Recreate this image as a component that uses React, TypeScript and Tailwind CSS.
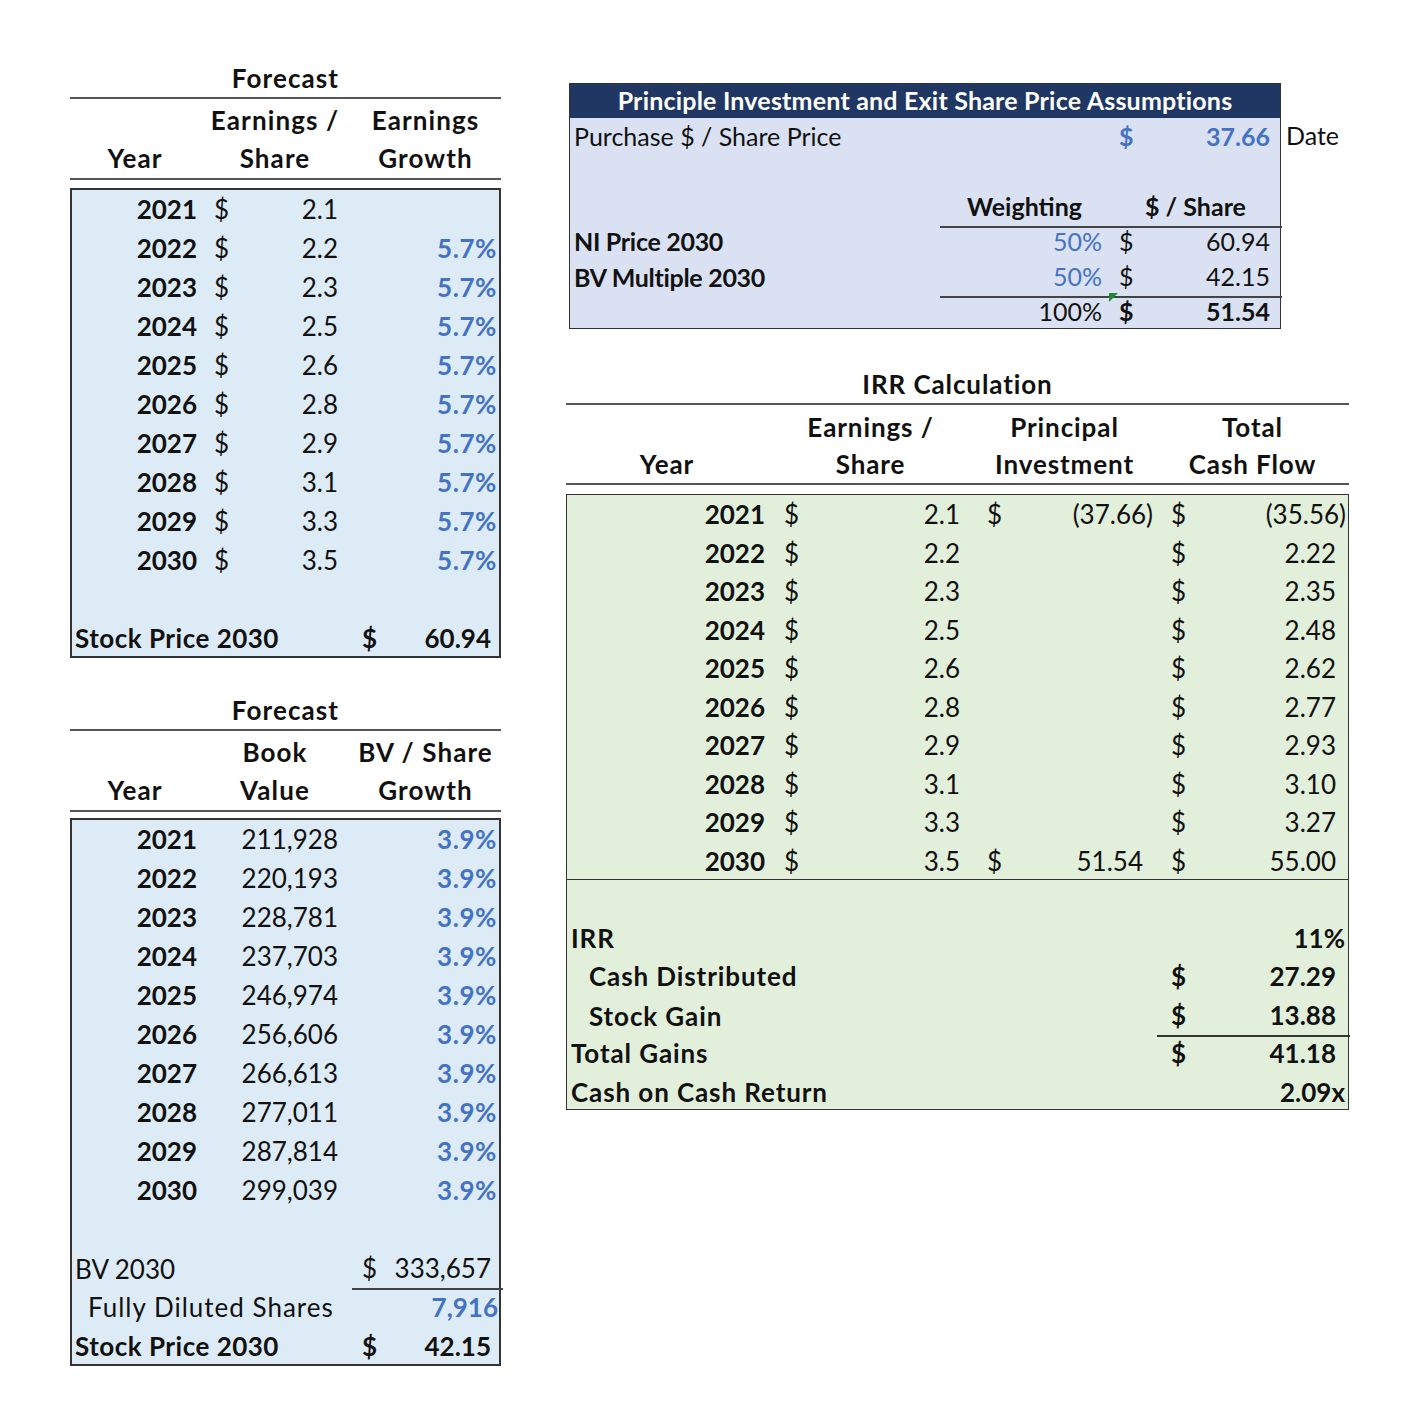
import React from 'react';

const blue = 'text-[#4472c4]';

const Acct: React.FC<{ v: string; bold?: boolean; className?: string; cur?: string }> = ({ v, bold, className = '', cur = '' }) => (
  <div className={`flex justify-between ${bold ? 'font-bold' : ''} ${className}`}>
    <span className={cur}>$</span>
    <span className={cur}>{v}</span>
  </div>
);

const earnings = [
  ['2021', '2.1', ''],
  ['2022', '2.2', '5.7%'],
  ['2023', '2.3', '5.7%'],
  ['2024', '2.5', '5.7%'],
  ['2025', '2.6', '5.7%'],
  ['2026', '2.8', '5.7%'],
  ['2027', '2.9', '5.7%'],
  ['2028', '3.1', '5.7%'],
  ['2029', '3.3', '5.7%'],
  ['2030', '3.5', '5.7%'],
];

const bookValues = [
  ['2021', '211,928'],
  ['2022', '220,193'],
  ['2023', '228,781'],
  ['2024', '237,703'],
  ['2025', '246,974'],
  ['2026', '256,606'],
  ['2027', '266,613'],
  ['2028', '277,011'],
  ['2029', '287,814'],
  ['2030', '299,039'],
];

const irrRows = [
  ['2021', '2.1', '(37.66)', '(35.56)'],
  ['2022', '2.2', '', '2.22'],
  ['2023', '2.3', '', '2.35'],
  ['2024', '2.5', '', '2.48'],
  ['2025', '2.6', '', '2.62'],
  ['2026', '2.8', '', '2.77'],
  ['2027', '2.9', '', '2.93'],
  ['2028', '3.1', '', '3.10'],
  ['2029', '3.3', '', '3.27'],
  ['2030', '3.5', '51.54', '55.00'],
];

const leftCols = 'grid grid-cols-[130px_150px_151px] items-center';
const leftGrid = `${leftCols} h-[39px]`;
const irrCols = 'grid grid-cols-[202px_205px_183px_193px] items-center';
const irrGrid = `${irrCols} h-[38.5px]`;
const boxGrid = 'grid grid-cols-[370px_169px_173px] h-[35px] items-center';

const TableHead: React.FC<{ a: [string, string]; b: [string, string] }> = ({ a, b }) => (
  <div className="tracking-[1.1px]">
    <div className="h-[39px] flex items-center justify-center font-bold border-b-2 border-[#555]">Forecast</div>
    <div className={`${leftCols} h-[40px] pt-[2px] font-bold text-center`}>
      <div></div>
      <div>{a[0]}</div>
      <div>{b[0]}</div>
    </div>
    <div className={`${leftCols} h-[41px] font-bold text-center border-b-2 border-[#555]`}>
      <div>Year</div>
      <div>{a[1]}</div>
      <div>{b[1]}</div>
    </div>
  </div>
);

const Num: React.FC<{ v: string }> = ({ v }) =>
  v.startsWith('(') ? <span>{v}</span> : <span className="pr-[10px]">{v}</span>;

export default function App() {
  return (
    <div className="min-h-[1420px] bg-white text-[#111] font-['Lato','Noto_Sans',sans-serif] flex items-start gap-[65px] pl-[70px] pt-[60px]">
      {/* left column */}
      <div className="w-[431px] text-[26px]">
        <TableHead a={['Earnings /', 'Share']} b={['Earnings', 'Growth']} />
        <div className="mt-[8px] border-2 border-[#333] bg-[#ddebf7]">
          {earnings.map(([y, e, g]) => (
            <div key={y} className={leftGrid}>
              <div className="text-right pr-[5px] font-bold">{y}</div>
              <Acct v={e} className="pl-[12px] pr-[14px]" />
              <div className={`text-right pr-[6px] font-bold tracking-[0.6px] ${blue}`}>{g}</div>
            </div>
          ))}
          <div className={leftGrid}></div>
          <div className={`${leftCols} h-[37px]`}>
            <div className="col-span-2 pl-[3px] font-bold tracking-[0.5px]">Stock Price 2030</div>
            <Acct v="60.94" bold className="pl-[10px] pr-[12px]" />
          </div>
        </div>

        <div className="mt-[34px]">
          <TableHead a={['Book', 'Value']} b={['BV / Share', 'Growth']} />
        </div>
        <div className="mt-[6px] border-2 border-[#333] bg-[#ddebf7]">
          {bookValues.map(([y, v]) => (
            <div key={y} className={leftGrid}>
              <div className="text-right pr-[5px] font-bold">{y}</div>
              <div className="text-right pr-[14px]">{v}</div>
              <div className={`text-right pr-[6px] font-bold tracking-[0.6px] ${blue}`}>3.9%</div>
            </div>
          ))}
          <div className={leftGrid}></div>
          <div className={leftGrid}>
            <div className="col-span-2 pl-[3px]">BV 2030</div>
            <div className="h-full flex items-center justify-between pl-[10px] pr-[12px] border-b-2 border-[#444]">
              <span>$</span>
              <span>333,657</span>
            </div>
          </div>
          <div className={leftGrid}>
            <div className="col-span-2 pl-[16px] tracking-[1px]">Fully Diluted Shares</div>
            <div className={`text-right pr-[5px] font-bold ${blue}`}>7,916</div>
          </div>
          <div className={`${leftCols} h-[37px]`}>
            <div className="col-span-2 pl-[3px] font-bold tracking-[0.5px]">Stock Price 2030</div>
            <Acct v="42.15" bold className="pl-[10px] pr-[12px]" />
          </div>
        </div>
      </div>

      {/* right column */}
      <div className="w-[783px] text-[25px] pt-[23px]">
        <div className="flex items-start ml-[3px]">
          <div className="w-[712px] border border-[#333] bg-[#d9e1f2]">
            <div className="h-[34px] bg-[#203764] text-white font-bold flex items-center justify-center tracking-[0.2px]">
              Principle Investment and Exit Share Price Assumptions
            </div>
            <div className={boxGrid}>
              <div className="col-span-2 pl-[4px]">Purchase $ / Share Price</div>
              <Acct v="37.66" bold cur={blue} className="pl-[10px] pr-[12px]" />
            </div>
            <div className={boxGrid}></div>
            <div className={`${boxGrid} font-bold text-center`}>
              <div></div>
              <div className="h-full flex items-center justify-center border-b-2 border-[#444]">Weighting</div>
              <div className="h-full flex items-center justify-center border-b-2 border-[#444]">$ / Share</div>
            </div>
            <div className={boxGrid}>
              <div className="pl-[4px] font-bold tracking-[-0.3px]">NI Price 2030</div>
              <div className={`text-right pr-[7px] ${blue}`}>50%</div>
              <Acct v="60.94" className="pl-[10px] pr-[12px]" />
            </div>
            <div className={boxGrid}>
              <div className="pl-[4px] font-bold tracking-[-0.3px]">BV Multiple 2030</div>
              <div className={`h-full flex items-center justify-end pr-[7px] border-b-2 border-[#444] ${blue}`}>50%</div>
              <Acct v="42.15" className="h-full items-center pl-[10px] pr-[12px] border-b-2 border-[#444]" />
            </div>
            <div className={boxGrid}>
              <div></div>
              <div className="text-right pr-[7px]">100%</div>
              <div className="relative h-full flex items-center">
                <span className="absolute left-0 top-0 w-0 h-0 border-t-[9px] border-t-[#1e8c2e] border-r-[9px] border-r-transparent"></span>
                <Acct v="51.54" bold className="w-full pl-[10px] pr-[12px]" />
              </div>
            </div>
          </div>
          <div className="pt-[35px] pl-[5px]">
            <div className="h-[35px] flex items-center">Date</div>
          </div>
        </div>

        <div className="text-[26px]">
          <div className="mt-[37px] tracking-[0.9px]">
            <div className="h-[39px] flex items-center justify-center font-bold border-b-2 border-[#555]">IRR Calculation</div>
            <div className={`${irrCols} h-[39px] pt-[3px] font-bold text-center`}>
              <div></div>
              <div>Earnings /</div>
              <div>Principal</div>
              <div>Total</div>
            </div>
            <div className={`${irrCols} h-[41px] pt-[1px] font-bold text-center border-b-2 border-[#555]`}>
              <div>Year</div>
              <div>Share</div>
              <div>Investment</div>
              <div>Cash Flow</div>
            </div>
          </div>

          <div className="mt-[9px] border border-[#333] bg-[#e2efda]">
            {irrRows.map(([y, e, p, t], i) => (
              <div key={y} className={`${irrGrid} ${i === irrRows.length - 1 ? 'border-b border-[#333]' : ''}`}>
                <div className="text-right pr-[4px] font-bold">{y}</div>
                <div className="flex justify-between pl-[15px] pr-[14px]">
                  <span>$</span>
                  <span>{e}</span>
                </div>
                <div className="flex justify-between pl-[13px] pr-[4px]">
                  {p ? (
                    <>
                      <span>$</span>
                      <Num v={p} />
                    </>
                  ) : null}
                </div>
                <div className="flex justify-between pl-[14px] pr-[4px]">
                  <span>$</span>
                  <Num v={t} />
                </div>
              </div>
            ))}
            <div className={irrGrid}></div>
            <div className={`${irrGrid} font-bold`}>
              <div className="col-span-3 pl-[4px] tracking-[0.9px]">IRR</div>
              <div className="text-right pr-[5px]">11%</div>
            </div>
            <div className={`${irrGrid} font-bold`}>
              <div className="col-span-3 pl-[22px] tracking-[0.9px]">Cash Distributed</div>
              <Acct v="27.29" className="pl-[14px] pr-[14px]" />
            </div>
            <div className={`${irrGrid} font-bold`}>
              <div className="col-span-3 pl-[22px] tracking-[0.9px]">Stock Gain</div>
              <Acct v="13.88" className="h-full items-center pl-[14px] pr-[14px] border-b-2 border-[#333]" />
            </div>
            <div className={`${irrGrid} font-bold`}>
              <div className="col-span-3 pl-[4px] tracking-[0.9px]">Total Gains</div>
              <Acct v="41.18" className="pl-[14px] pr-[14px]" />
            </div>
            <div className={`${irrCols} h-[36.5px] font-bold`}>
              <div className="col-span-3 pl-[4px] tracking-[0.9px]">Cash on Cash Return</div>
              <div className="text-right pr-[5px]">2.09x</div>
            </div>
          </div>
        </div>
      </div>
    </div>
  );
}
